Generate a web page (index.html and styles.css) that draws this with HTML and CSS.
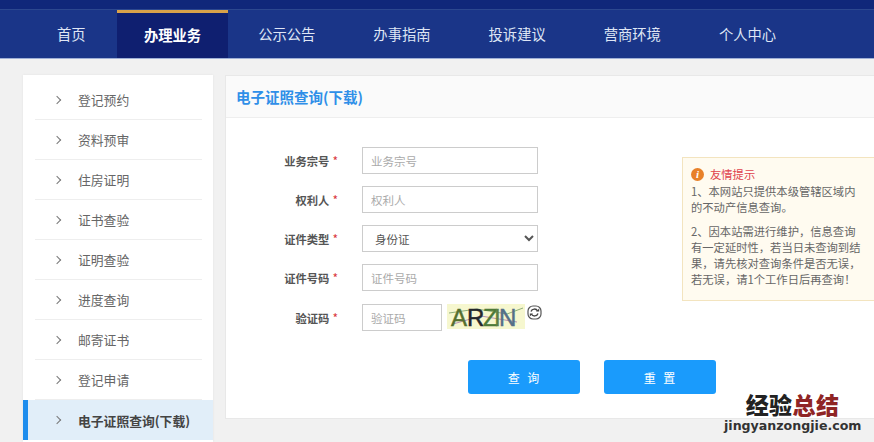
FILE: index.html
```html
<!DOCTYPE html>
<html>
<head>
  <meta charset="utf-8">
  <title>电子证照查询(下载)</title>
  <link rel="stylesheet" href="styles.css">
</head>
<body>
  <header class="topbar">
    <nav class="nav">
      <a class="nav-item">首页</a>
      <a class="nav-item active">办理业务</a>
      <a class="nav-item">公示公告</a>
      <a class="nav-item">办事指南</a>
      <a class="nav-item">投诉建议</a>
      <a class="nav-item">营商环境</a>
      <a class="nav-item">个人中心</a>
    </nav>
  </header>

  <div class="page">
    <!-- Side menu -->
    <aside class="sidebar">
      <a class="side-item"><span class="chevron"></span>登记预约</a>
      <a class="side-item"><span class="chevron"></span>资料预审</a>
      <a class="side-item"><span class="chevron"></span>住房证明</a>
      <a class="side-item"><span class="chevron"></span>证书查验</a>
      <a class="side-item"><span class="chevron"></span>证明查验</a>
      <a class="side-item"><span class="chevron"></span>进度查询</a>
      <a class="side-item"><span class="chevron"></span>邮寄证书</a>
      <a class="side-item"><span class="chevron"></span>登记申请</a>
      <a class="side-item active"><span class="chevron"></span>电子证照查询(下载)</a>
    </aside>

    <!-- Query panel -->
    <main class="panel">
      <div class="panel-head">电子证照查询(下载)</div>
      <div class="panel-body">
        <form class="form">
          <div class="form-row">
            <label class="form-label">业务宗号<i>*</i></label>
            <input class="field" type="text" placeholder="业务宗号">
          </div>
          <div class="form-row">
            <label class="form-label">权利人<i>*</i></label>
            <input class="field" type="text" placeholder="权利人">
          </div>
          <div class="form-row">
            <label class="form-label">证件类型<i>*</i></label>
            <select class="field select"><option>身份证</option></select>
          </div>
          <div class="form-row">
            <label class="form-label">证件号码<i>*</i></label>
            <input class="field" type="text" placeholder="证件号码">
          </div>
          <div class="form-row code-row">
            <label class="form-label">验证码<i>*</i></label>
            <input class="field short" type="text" placeholder="验证码">
            <svg class="captcha" width="78" height="27" viewBox="0 0 78 27">
              <rect width="78" height="25" fill="#f6f7cf"/>
              <path d="M2 9 L30 5 L60 10 L76 4" stroke="#8fae7a" stroke-width="1" fill="none"/>
              <path d="M6 20 L34 12 L70 18" stroke="#b792b0" stroke-width="1" fill="none"/>
              <text x="4" y="22" class="cap-a" fill="#55702f" stroke="#55702f">A</text>
              <text x="20" y="22" class="cap-a" fill="#23262b" stroke="#23262b">R</text>
              <text x="36" y="22" class="cap-a" fill="#4d7a38" stroke="#4d7a38">Z</text>
              <text x="47" y="22" class="cap-a" fill="#5c7f43" stroke="#5c7f43">I</text>
              <text x="52" y="22" class="cap-a" fill="#556f88" stroke="#556f88">N</text>
            </svg>
            <svg class="refresh" width="15" height="15" viewBox="0 0 15 15">
              <rect x="1" y="1" width="13" height="13" rx="5" fill="#fff" stroke="#555" stroke-width="1.2"/>
              <path d="M4 6.5 A3.6 3.6 0 0 1 10.6 6" fill="none" stroke="#444" stroke-width="1.4"/>
              <path d="M9 6.4 H12.2 V3.6 Z" fill="#444"/>
              <path d="M11 8.5 A3.6 3.6 0 0 1 4.4 9" fill="none" stroke="#444" stroke-width="1.4"/>
              <path d="M6 8.6 H2.8 V11.4 Z" fill="#444"/>
            </svg>
          </div>
          <div class="form-actions">
            <button class="btn" type="button">查 询</button>
            <button class="btn" type="button">重 置</button>
          </div>
        </form>

        <div class="notice">
          <div class="notice-title"><span class="notice-icon">i</span>友情提示</div>
          <p>1、本网站只提供本级管辖区域内的不动产信息查询。</p>
          <p>2、因本站需进行维护，信息查询有一定延时性，若当日未查询到结果，请先核对查询条件是否无误，若无误，请1个工作日后再查询！</p>
        </div>
      </div>
    </main>
  </div>

  <!-- Watermark over the page corner -->
  <div class="watermark">
    <div class="wm-title">经验<span>总结</span></div>
    <div class="wm-url">jingyanzongjie.com</div>
  </div>
</body>
</html>
```

FILE: styles.css
```css
html, body {
  height: 442px;
  overflow: hidden;
}

body {
  margin: 0;
  position: relative;
  font-family: "Noto Sans CJK SC", "Noto Sans", sans-serif;
  color: #555;
  background: #f1f1f1;
}

.topbar {
  height: 59px;
  padding-top: 9px;
  box-sizing: border-box;
  background: #10277a;
  border-bottom: 1px solid #9fb0d6;
}

.nav {
  height: 49px;
  box-sizing: border-box;
  padding-left: 29px;
  display: flex;
  gap: 2px;
  background: #1a3588;
  border-top: 1px solid #2c478f;
}

.nav-item {
  padding: 0 28px;
  font-size: 14.3px;
  line-height: 47px;
  color: #dfe6f5;
}

.nav-item.active {
  margin-left: 1.4px;
  padding: 0 27px;
  color: #fff;
  font-weight: 700;
  background: #0f1f70;
  border-top: 3px solid #d9a24a;
  line-height: 43px;
}

.page {
  padding: 16px 0 0 23px;
  display: flex;
  align-items: flex-start;
  gap: 12px;
}

.sidebar {
  flex: none;
  width: 190px;
  padding: 5px 0 2px;
  background: #fff;
  box-shadow: 0 0 2px #e2e2e2;
}

.side-item {
  height: 40px;
  margin: 0 11px 0 12px;
  display: flex;
  align-items: center;
  box-sizing: border-box;
  font-size: 12.8px;
  white-space: nowrap;
  color: #666;
  border-bottom: 1px solid #eee;
}

.chevron {
  width: 5px;
  height: 5px;
  margin: 0 18px 0 19px;
  border-top: 1px solid #777;
  border-right: 1px solid #777;
  transform: rotate(45deg);
}

.side-item.active {
  margin: 0;
  border-left: 5px solid #1f8ded;
  padding-left: 7px;
  border-bottom: none;
  background: #e1eef9;
  color: #444;
  font-weight: 700;
}

.panel {
  flex: none;
  width: 649px;
  height: 344px;
  background: #fff;
  border: 1px solid #e8e8e8;
  border-right: none;
  box-sizing: border-box;
}

.panel-head {
  height: 42px;
  box-sizing: border-box;
  padding-left: 10px;
  font-size: 14.5px;
  font-weight: 700;
  line-height: 42px;
  color: #2f8fe8;
  background: #fafafa;
  border-bottom: 1px solid #eee;
}

.panel-body {
  display: flex;
  justify-content: space-between;
  align-items: flex-start;
}

/* buttons run on under the notice, so the form is narrower than its row */
.form {
  flex: none;
  width: 456px;
  padding-top: 29px;
}

.form-row {
  height: 27px;
  margin-bottom: 12px;
  display: flex;
  align-items: center;
}

.code-row {
  margin-top: 13px;
}

.form-label {
  width: 136px;
  padding-right: 24px;
  box-sizing: border-box;
  text-align: right;
  font-size: 11.3px;
  font-weight: 700;
  color: #555;
}

.form-label i {
  margin-left: 3px;
  font-style: normal;
  font-size: 12px;
  font-weight: 400;
  color: #d9363e;
}

.field {
  width: 176px;
  height: 27px;
  padding: 0 8px;
  box-sizing: border-box;
  font-family: inherit;
  font-size: 11.5px;
  color: #555;
  background: #fff;
  border: 1px solid #ccc;
  border-radius: 0;
}

.field::placeholder {
  color: #aaa;
}

.short {
  width: 80px;
}

.captcha {
  margin-left: 5px;
}

.cap-a {
  font-family: "Liberation Sans", sans-serif;
  font-size: 24px;
  stroke-width: 0.5;
}

.refresh {
  margin: -11px 0 0 2px;
}

.form-actions {
  padding: 17px 0 0 242px;
  display: flex;
  gap: 24px;
}

.btn {
  flex: none;
  width: 112px;
  height: 34px;
  font-family: inherit;
  font-size: 12px;
  letter-spacing: 1px;
  word-spacing: 3px;
  color: #fff;
  background: #1a9bfc;
  border: none;
  border-radius: 3px;
}

.notice {
  flex: none;
  width: 192px;
  height: 144px;
  margin-top: 39px;
  padding: 8px 11px 0 8px;
  box-sizing: border-box;
  font-size: 11.3px;
  line-height: 16px;
  color: #666;
  background: #fffbf0;
  border: 1px solid #f3e4bf;
  border-right: none;
}

.notice p {
  margin: 1px 0 8px;
}

.notice-title {
  display: flex;
  align-items: center;
  gap: 6px;
  line-height: 16px;
  color: #e0424c;
}

.notice-icon {
  width: 13px;
  height: 13px;
  border-radius: 50%;
  background: #e8812a;
  color: #fff;
  font-family: "Liberation Serif", serif;
  font-style: italic;
  font-weight: 700;
  font-size: 11px;
  line-height: 13px;
  text-align: center;
}

.watermark {
  position: absolute;
  left: 724px;
  top: 389px;
  width: 137px;
  text-align: center;
}

.wm-title {
  font-size: 23px;
  font-weight: 900;
  line-height: 30px;
  letter-spacing: 0.4px;
  color: #222;
}

.wm-title span {
  color: #8f2525;
}

.wm-url {
  font-family: "DejaVu Sans", sans-serif;
  font-size: 12.6px;
  font-weight: 700;
  line-height: 14px;
  color: #333;
  white-space: nowrap;
}
```
